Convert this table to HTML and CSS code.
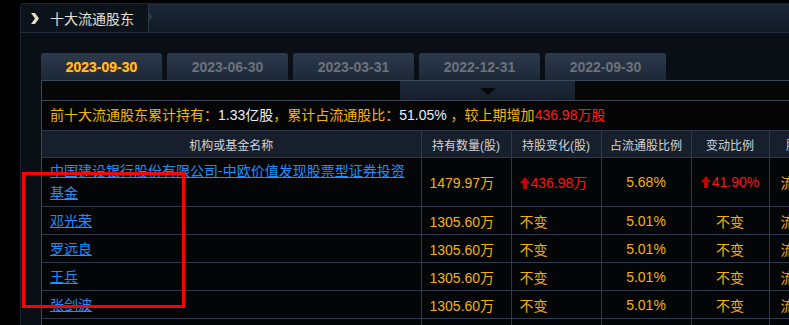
FILE: index.html
```html
<!DOCTYPE html>
<html lang="zh">
<head>
<meta charset="utf-8">
<title>十大流通股东</title>
<link rel="stylesheet" href="styles.css">
</head>
<body>
<div class="panel">
  <div class="titlebar">
    <div class="titletab">
      <svg class="chev" width="10" height="11" viewBox="0 0 10 11"><path d="M1 0 L5 0 L9 5.5 L5 11 L1 11 L5 5.5 Z" fill="#e9dcc0"/></svg>
      <span class="title">十大流通股东</span>
      <span class="notch"></span>
    </div>
  </div>
  <div class="inner">
    <div class="tabs">
      <div class="tab active">2023-09-30</div>
      <div class="tab">2023-06-30</div>
      <div class="tab">2023-03-31</div>
      <div class="tab">2022-12-31</div>
      <div class="tab">2022-09-30</div>
    </div>
    <div class="content">
      <div class="dropbar"><div class="dropbox"><span class="tri"></span></div></div>
      <div class="summary">前十大流通股东累计持有：<span class="w">1.33亿股</span>，累计占流通股比：<span class="w">51.05%</span> ，较上期增加<span class="r">436.98万股</span></div>
      <table class="grid">
        <colgroup><col class="c1"><col class="c2"><col class="c3"><col class="c4"><col class="c5"><col class="c6"></colgroup>
        <thead>
          <tr><th>机构或基金名称</th><th>持有数量(股)</th><th>持股变化(股)</th><th>占流通股比例</th><th>变动比例</th><th>股份类型</th></tr>
        </thead>
        <tbody>
          <tr class="tall"><td class="name"><a href="#">中国建设银行股份有限公司-中欧价值发现股票型证券投资基金</a></td><td class="num">1479.97万</td><td class="red"><svg class="up" width="10" height="12" viewBox="0 0 10 12"><path d="M5 0 L10 6 L7 6 L7 12 L3 12 L3 6 L0 6 Z" fill="#c40000"/></svg>436.98万</td><td class="ctr num">5.68%</td><td class="ctr red"><svg class="up" width="10" height="12" viewBox="0 0 10 12"><path d="M5 0 L10 6 L7 6 L7 12 L3 12 L3 6 L0 6 Z" fill="#c40000"/></svg>41.90%</td><td class="type">流通A股</td></tr>
          <tr><td class="name"><a href="#">邓光荣</a></td><td class="num">1305.60万</td><td>不变</td><td class="ctr num">5.01%</td><td class="ctr">不变</td><td class="type">流通A股</td></tr>
          <tr><td class="name"><a href="#">罗远良</a></td><td class="num">1305.60万</td><td>不变</td><td class="ctr num">5.01%</td><td class="ctr">不变</td><td class="type">流通A股</td></tr>
          <tr><td class="name"><a href="#">王兵</a></td><td class="num">1305.60万</td><td>不变</td><td class="ctr num">5.01%</td><td class="ctr">不变</td><td class="type">流通A股</td></tr>
          <tr><td class="name"><a href="#">张剑波</a></td><td class="num">1305.60万</td><td>不变</td><td class="ctr num">5.01%</td><td class="ctr">不变</td><td class="type">流通A股</td></tr>
          <tr><td class="name"><a href="#">徐彦</a></td><td class="num">1305.60万</td><td>不变</td><td class="ctr num">5.01%</td><td class="ctr">不变</td><td class="type">流通A股</td></tr>
        </tbody>
      </table>
    </div>
  </div>
</div>
<div class="mark"></div>
</body>
</html>
```
FILE: styles.css
```css
html, body {
  margin: 0;
  padding: 0;
  background: #000;
  overflow: hidden;
  width: 789px;
  height: 325px;
  font-family: "Liberation Sans", "Noto Sans CJK SC", sans-serif;
  font-size: 14px;
}
.panel {
  margin: 3px 0 0 20px;
  width: 820px;
  height: 340px;
  background: #0a0e15;
  border-left: 1px solid #1c2531;
  border-top: 1px solid #1c2531;
  border-radius: 4px 0 0 0;
  box-sizing: border-box;
}
.titlebar {
  height: 28px;
  display: flex;
  background: linear-gradient(#1b2837, #111a26);
  border-bottom: 1px solid #222c39;
  border-radius: 4px 0 0 0;
}
.titletab {
  position: relative;
  width: 128px;
  display: flex;
  align-items: center;
  gap: 10px;
  padding-left: 9px;
  box-sizing: border-box;
  background: #0d131b;
  border-right: 1px solid #2d3847;
  border-radius: 4px 0 0 0;
}
.chev { flex: none; }
.title {
  color: #e6e0d4;
  font-size: 14px;
}
.notch {
  position: absolute;
  right: -5px;
  top: 9px;
  width: 0;
  height: 0;
  border-top: 4px solid transparent;
  border-bottom: 4px solid transparent;
  border-left: 4px solid #2d3847;
}
.inner {
  padding: 20px 0 0 20px;
}
.tabs {
  display: flex;
  gap: 5px;
  height: 27px;
}
.tab {
  width: 121px;
  flex: none;
  box-sizing: border-box;
  background: linear-gradient(#2c3a4d, #1d2736);
  border-radius: 3px 3px 0 0;
  color: #6c717a;
  font-weight: bold;
  font-size: 14px;
  text-align: center;
  line-height: 29px;
}
.tab.active {
  color: #ffc21a;
  text-shadow: 0 0 1px #c05000;
}
.content {
  border-left: 1px solid #3a4657;
  border-top: 1px solid #3c495a;
  background: #060606;
}
.dropbar {
  height: 19px;
  background: #070708;
  border-bottom: 1px solid #3a4657;
  display: flex;
}
.dropbox {
  margin-left: 358px;
  width: 175px;
  background: linear-gradient(#1d2838, #161f2c);
  display: flex;
  justify-content: center;
  align-items: flex-start;
}
.tri {
  margin-top: 7px;
  width: 0;
  height: 0;
  border-left: 8px solid transparent;
  border-right: 8px solid transparent;
  border-top: 7px solid #06080c;
}
.summary {
  height: 29px;
  line-height: 29px;
  padding-left: 8px;
  color: #f6b400;
  white-space: nowrap;
  background: #050505;
}
.summary .w { color: #e6f0ff; }
.summary .r { color: #ff1a1a; }
.grid {
  border-collapse: collapse;
  table-layout: fixed;
  width: 809px;
  background: #040506;
}
.grid col.c1 { width: 379px; }
.grid col.c2 { width: 90px; }
.grid col.c3 { width: 90px; }
.grid col.c4 { width: 90px; }
.grid col.c5 { width: 78px; }
.grid col.c6 { width: 82px; }
.grid th, .grid td {
  border: 1px solid #2e3a4b;
  padding: 0 0 0 8px;
  white-space: nowrap;
  overflow: hidden;
}
.grid tr > :first-child { border-left: none; }
.grid th {
  height: 26px;
  background: #161f2b;
  color: #d2d4d8;
  font-weight: normal;
  font-size: 12px;
  text-align: center;
  padding: 0;
}
.grid td {
  height: 27px;
  color: #f5b300;
  font-size: 14px;
}
.grid tr.tall td { height: 48px; }
.grid td.name {
  white-space: normal;
  line-height: 22px;
  padding: 0 12px 0 8px;
}
.grid td.name a {
  color: #1a8fff;
  text-decoration: underline;
}
.grid td.ctr { text-align: center; padding: 0; }
.grid td.red { color: #ff1010; }
.grid td.type { padding-left: 11px; }
.up {
  vertical-align: -1px;
  margin-right: 1px;
}
.mark {
  position: absolute;
  left: 22px;
  top: 172px;
  width: 163px;
  height: 136px;
  box-sizing: border-box;
  border: 3px solid #ff0000;
}
```
